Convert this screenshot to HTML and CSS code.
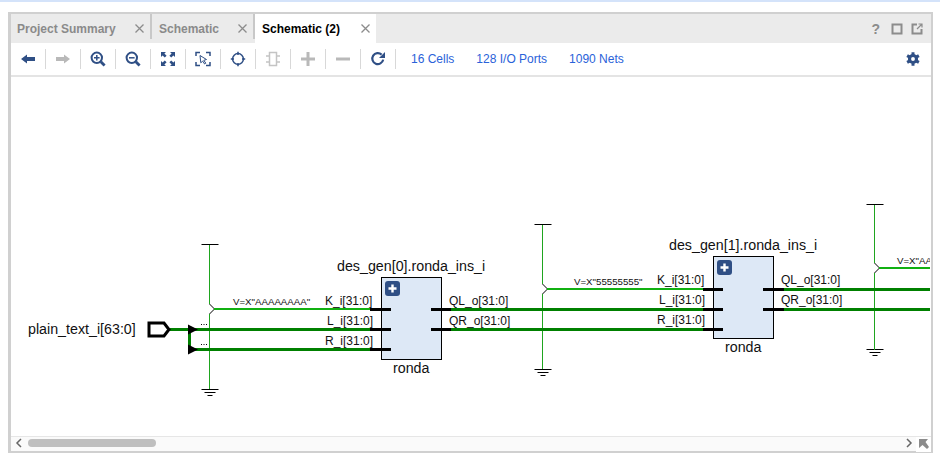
FILE: index.html
```html
<!DOCTYPE html>
<html lang="en">
<head>
  <meta charset="UTF-8" />
  <title>Schematic (2)</title>
  <link rel="stylesheet" href="styles.css">
</head>
<body>
  <div class="top-strip"></div>
  <div class="panel">
    <div class="tabs">
      <div class="tab"><span class="tab-name">Project Summary</span><svg class="tab-x" width="9" height="9" viewBox="0 0 9 9"><path d="M.5 .5L8.500 8.500M8.500 .5L.5 8.500"/></svg></div>
      <div class="tab tab-short"><span class="tab-name">Schematic</span><svg class="tab-x" width="9" height="9" viewBox="0 0 9 9"><path d="M.5 .5L8.500 8.500M8.500 .5L.5 8.500"/></svg></div>
      <div class="tab tab-active"><span class="tab-name">Schematic (2)</span><svg class="tab-x" width="9" height="9" viewBox="0 0 9 9"><path d="M.5 .5L8.500 8.500M8.500 .5L.5 8.500"/></svg></div>
      <div class="win-icons">
        <span class="help">?</span>
        <svg width="12" height="12" viewBox="0 0 12 12"><rect x="1.500" y="1.500" width="9" height="9" fill="none" stroke="#8c8c8c" stroke-width="2"/></svg>
        <svg width="12" height="12" viewBox="0 0 12 12"><path d="M6 1.500H1.500V10.500H10.500V6" fill="none" stroke="#8c8c8c" stroke-width="2"/><path d="M6 6L10.500 1.500M7.500 1H11V4.500" fill="none" stroke="#8c8c8c" stroke-width="1.200"/></svg>
      </div>
    </div>

    <div class="toolbar">
      <div class="tool"><svg width="16" height="16" viewBox="0 0 16 16"><path d="M1 8L7 3.500V6H15V10H7V12.500Z" fill="#2f4f85"/></svg></div>
      <div class="tool"><svg width="16" height="16" viewBox="0 0 16 16"><path d="M15 8L9 3.500V6H1V10H9V12.500Z" fill="#b9b9b9"/></svg></div>
      <div class="tool"><svg width="16" height="16" viewBox="0 0 16 16"><circle cx="6.800" cy="6.800" r="5.200" fill="none" stroke="#2f4f85" stroke-width="2"/><path d="M10.800 10.800L14.600 14.600" stroke="#2f4f85" stroke-width="2.800"/><path d="M4 6.800H9.600M6.800 4V9.600" stroke="#2f4f85" stroke-width="1.500"/></svg></div>
      <div class="tool"><svg width="16" height="16" viewBox="0 0 16 16"><circle cx="6.800" cy="6.800" r="5.200" fill="none" stroke="#2f4f85" stroke-width="2"/><path d="M10.800 10.800L14.600 14.600" stroke="#2f4f85" stroke-width="2.800"/><path d="M4 6.800H9.600" stroke="#2f4f85" stroke-width="1.500"/></svg></div>
      <div class="tool"><svg width="16" height="16" viewBox="0 0 16 16"><path d="M1 1H6L4.400 2.600L6.600 4.800L4.800 6.600L2.600 4.400L1 6ZM15 1V6L13.400 4.400L11.200 6.600L9.400 4.800L11.600 2.600L10 1ZM1 15V10L2.600 11.600L4.800 9.400L6.600 11.200L4.400 13.400L6 15ZM15 15H10L11.600 13.400L9.400 11.200L11.200 9.400L13.400 11.600L15 10Z" fill="#2f4f85"/></svg></div>
      <div class="tool"><svg width="16" height="16" viewBox="0 0 16 16"><path d="M1 5V1.500H5M11 1.500H15V5M15 11V14.500H11M5 14.500H1V11" fill="none" stroke="#2f4f85" stroke-width="1.500"/><path d="M5 4.500L11.500 8.500L8.800 9.300L10.800 12.200L9.600 13L7.700 10.100L5.800 11.800Z" fill="#fff" stroke="#2f4f85"/></svg></div>
      <div class="tool"><svg width="16" height="16" viewBox="0 0 16 16"><circle cx="8" cy="8" r="5.400" fill="none" stroke="#2f4f85" stroke-width="1.500"/><path d="M8 .8V4M8 12V15.200M.8 8H4M12 8H15.200" stroke="#2f4f85" stroke-width="1.500"/></svg></div>
      <div class="tool"><svg width="16" height="16" viewBox="0 0 16 16"><rect x="4.500" y="1.500" width="7" height="13" fill="none" stroke="#c4c4c4" stroke-width="1.500"/><path d="M1 5H4M1 11H4M12 5H15M12 11H15" stroke="#c4c4c4" stroke-width="1.500"/></svg></div>
      <div class="tool"><svg width="16" height="16" viewBox="0 0 16 16"><path d="M1 8H15M8 1V15" stroke="#b9b9b9" stroke-width="3"/></svg></div>
      <div class="tool"><svg width="16" height="16" viewBox="0 0 16 16"><path d="M1 8H15" stroke="#b9b9b9" stroke-width="3"/></svg></div>
      <div class="tool"><svg width="16" height="16" viewBox="0 0 16 16"><path d="M13.200 8.600A5.500 5.500 0 1 1 11.600 3.600" fill="none" stroke="#2f4f85" stroke-width="2.200"/><path d="M15 1V7H9Z" fill="#2f4f85"/></svg></div>
      <div class="stats">
        <span>16 Cells</span>
        <span>128 I/O Ports</span>
        <span>1090 Nets</span>
      </div>
      <div class="gear"><svg width="14" height="14" viewBox="0 0 16 16"><circle cx="8" cy="8" r="4" fill="none" stroke="#2f4f85" stroke-width="3.600"/><path d="M8 .3V3.200M8 12.800V15.700M1.300 4.100L3.900 5.600M12.100 10.400L14.700 11.900M1.300 11.900L3.900 10.400M12.100 5.600L14.700 4.100" stroke="#2f4f85" stroke-width="3.400"/></svg></div>
    </div>

    <div class="canvas">
      <svg class="schematic" width="919" height="359" viewBox="11 77 919 359">
        <defs>
          <g id="rail">
            <path d="M-8 0H9M-8 145H9M-5 148H6M-2 151H3" stroke="#000" fill="none"/>
          </g>
          <g id="plus">
            <rect width="15" height="15" rx="3" fill="#2f4f85"/>
            <path d="M7.500 3.500V11.500M3.500 7.500H11.500" stroke="#fff" stroke-width="2.400"/>
          </g>
        </defs>

        <!-- power rails -->
        <use href="#rail" x="209.500" y="244.500"/>
        <use href="#rail" x="542.500" y="224.500"/>
        <use href="#rail" x="874.500" y="204.500"/>
        <path class="net-thin" d="M209.500 245V304M209.500 314V389M542.500 225V284M542.500 294V369M874.500 205V263M874.500 273V350"/>
        <path class="kink" d="M209.500 304L214.500 309L209.500 314M542.500 284L547.500 289L542.500 294M874.500 263L879.500 268L874.500 273"/>

        <!-- nets -->
        <path class="net-const" d="M214 309H370M547 289H703M879 268H930"/>
        <path class="net-bus" d="M170 329.500H189.500V349.500M189.500 329.500H370M189.500 349.500H370M451 309.500H703M451 329.500H703M784 289.500H930M784 309.500H930"/>

        <!-- input port -->
        <path class="port" d="M149 323H164L169 329.500L164 336H149Z"/>
        <path d="M188 324.500L198 329.500L188 334.500ZM188 344.500L198 349.500L188 354.500Z" fill="#000"/>
        <path class="dots" d="M201 324.500H202M203.500 324.500H204.500M206 324.500H207M201 344.500H202M203.500 344.500H204.500M206 344.500H207"/>

        <!-- blocks -->
        <rect class="block" x="381.500" y="277.500" width="60" height="82"/>
        <rect class="block" x="713.500" y="256.500" width="60" height="82"/>
        <use href="#plus" x="385" y="281"/>
        <use href="#plus" x="717" y="260"/>
        <path class="pin" d="M370 309.500H391M370 329.500H391M370 349.500H391M431 309.500H451M431 329.500H451M703 289.500H723M703 309.500H723M703 329.500H723M763 289.500H784M763 309.500H784"/>

        <!-- labels -->
        <text class="lbl-port" x="28" y="334">plain_text_i[63:0]</text>
        <text class="lbl-inst" x="337" y="271">des_gen[0].ronda_ins_i</text>
        <text class="lbl-inst" x="669" y="250">des_gen[1].ronda_ins_i</text>
        <text class="lbl-inst" x="393" y="373">ronda</text>
        <text class="lbl-inst" x="725" y="352">ronda</text>
        <text class="lbl-pin" x="325" y="305">K_i[31:0]</text>
        <text class="lbl-pin" x="327" y="325">L_i[31:0]</text>
        <text class="lbl-pin" x="325" y="345">R_i[31:0]</text>
        <text class="lbl-pin" x="449" y="305">QL_o[31:0]</text>
        <text class="lbl-pin" x="449" y="325">QR_o[31:0]</text>
        <text class="lbl-pin" x="657" y="284">K_i[31:0]</text>
        <text class="lbl-pin" x="659" y="304">L_i[31:0]</text>
        <text class="lbl-pin" x="657" y="324">R_i[31:0]</text>
        <text class="lbl-pin" x="781" y="284">QL_o[31:0]</text>
        <text class="lbl-pin" x="781" y="304">QR_o[31:0]</text>
        <text class="lbl-val" x="233" y="305">V=X"AAAAAAAA"</text>
        <text class="lbl-val" x="574" y="285">V=X"55555555"</text>
        <text class="lbl-val" x="897" y="264">V=X"AA</text>
      </svg>
    </div>

    <div class="scrollbar">
      <svg class="arrow" width="8" height="10" viewBox="0 0 8 10"><path d="M6 1L2 5L6 9" fill="none" stroke="#666" stroke-width="1.500"/></svg>
      <div class="thumb"></div>
      <svg class="arrow arrow-right" width="8" height="10" viewBox="0 0 8 10"><path d="M2 1L6 5L2 9" fill="none" stroke="#666" stroke-width="1.500"/></svg>
      <div class="corner"><svg width="10" height="10" viewBox="0 0 10 10"><path d="M0 0H9L6.500 3L10 8L8 10L3.500 6L0 9Z" fill="#8c8c8c"/></svg></div>
    </div>
  </div>
</body>
</html>
```

FILE: styles.css
```css
body { margin: 0; background: #fff; font-family: "Liberation Sans", Arial, sans-serif; overflow: hidden; }
.top-strip { height: 2px; background: #d4e3fa; }

.panel { display: flex; flex-direction: column; height: 437px; margin: 10px 7px 0 8px; border: 2px solid #d0d0d0; border-left-width: 3px; }

.tabs { display: flex; height: 29px; background: #ebebeb; }
.tab { display: flex; justify-content: space-between; align-items: center; width: 141px; height: 25px; padding: 4px 6px 0 6px; box-sizing: border-box; border-right: 2px solid #c8c8c8; font-size: 12px; font-weight: bold; color: #8a8a8a; }
.tab-short { width: 103px; padding-left: 7px; }
.tab-active { width: 121px; height: 29px; padding: 0 6px 0 7px; background: #fff; color: #000; border-right: 0; }
.tab-x { fill: none; stroke: #8c8c8c; stroke-width: 1.3; flex: none; }

.win-icons { display: flex; align-items: center; gap: 8px; margin-left: auto; padding-right: 8px; }
.help { font-size: 14px; font-weight: bold; color: #8c8c8c; margin-right: 3px; }

.toolbar { display: flex; align-items: center; height: 32px; border-bottom: 2px solid #e4e4e4; }
.tool { display: flex; align-items: center; justify-content: center; width: 35px; height: 20px; box-sizing: border-box; border-right: 1px solid #d8d8d8; }
.stats { display: flex; gap: 22px; padding-left: 15px; font-size: 12px; color: #2a62d9; }
.gear { display: flex; margin-left: auto; padding-right: 11px; }

.canvas { flex: 1; min-height: 0; background: #fff; }
.schematic { display: block; }

.net-thin { fill: none; stroke: #1fa51f; stroke-width: 1; }
.kink { fill: none; stroke: #000; stroke-width: 1; }
.net-const { fill: none; stroke: #11b011; stroke-width: 2; }
.net-bus { fill: none; stroke: #008000; stroke-width: 3; }
.port { fill: #fff; stroke: #000; stroke-width: 3; }
.dots { stroke: #000; stroke-width: 1; }
.block { fill: #dde8f6; stroke: #000; stroke-width: 1; }
.pin { stroke: #000; stroke-width: 3; }

.schematic text { font-family: "Liberation Sans", Arial, sans-serif; fill: #111; }
.lbl-port { font-size: 14.25px; }
.lbl-inst { font-size: 14.25px; }
.lbl-pin { font-size: 12px; }
.lbl-val { font-size: 9.7px; }

.scrollbar { display: flex; align-items: center; height: 15px; padding-bottom: 2px; box-sizing: border-box; border-top: 1px solid #e6e6e6; background: #fafafa; }
.arrow { margin-left: 4px; flex: none; }
.arrow-right { margin-left: auto; }
.thumb { width: 128px; height: 8px; margin-left: 5px; border-radius: 4px; background: #bfbfbf; }
.corner { display: flex; align-items: center; justify-content: center; width: 15px; height: 15px; margin-left: 3px; margin-bottom: -2px; background: #fff; }
```
